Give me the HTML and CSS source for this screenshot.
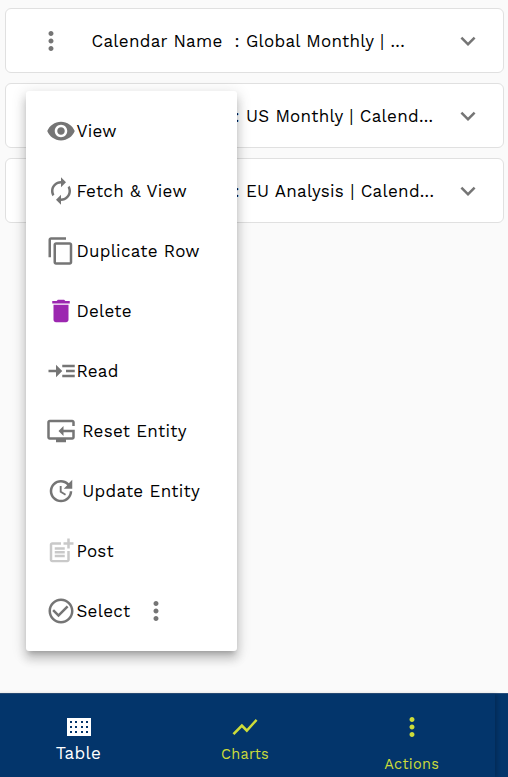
FILE: index.html
```html
<!DOCTYPE html>
<html lang="en">
<head>
<meta charset="utf-8">
<title>Calendars</title>
<link rel="stylesheet" href="styles.css">
</head>
<body>
<svg class="defs" aria-hidden="true">
  <symbol id="more" viewBox="0 0 24 24"><path d="M12 8c1.100 0 2-.9 2-2s-.9-2-2-2-2 .9-2 2 .9 2 2 2zm0 2c-1.100 0-2 .9-2 2s.9 2 2 2 2-.9 2-2-.9-2-2-2zm0 6c-1.100 0-2 .9-2 2s.9 2 2 2 2-.9 2-2-.9-2-2-2z"/></symbol>
  <symbol id="expand" viewBox="0 0 24 24"><path d="M16.590 8.590 12 13.170 7.410 8.590 6 10l6 6 6-6z"/></symbol>
</svg>
<main class="list">
  <article class="card first">
    <svg class="icon"><use href="#more"/></svg>
    <span class="label">Calendar Name</span>
    <span class="value">: Global Monthly | ...</span>
    <svg class="icon expand"><use href="#expand"/></svg>
  </article>
  <article class="card">
    <span class="value">: US Monthly | Calend...</span>
    <svg class="icon expand"><use href="#expand"/></svg>
  </article>
  <article class="card">
    <span class="value">: EU Analysis | Calend...</span>
    <svg class="icon expand"><use href="#expand"/></svg>
  </article>
</main>

<div class="menu">
  <div class="item"><svg class="icon" viewBox="0 0 24 24"><path d="M12 4.500C7 4.500 2.730 7.610 1 12c1.730 4.390 6 7.500 11 7.500s9.270-3.110 11-7.500c-1.730-4.390-6-7.500-11-7.500zM12 17c-2.760 0-5-2.240-5-5s2.240-5 5-5 5 2.240 5 5-2.240 5-5 5zm0-8c-1.660 0-3 1.340-3 3s1.340 3 3 3 3-1.340 3-3-1.340-3-3-3z"/></svg><span>View</span></div>
  <div class="item"><svg class="icon" viewBox="0 0 24 24"><path d="M12 6v3l4-4-4-4v3c-4.420 0-8 3.580-8 8 0 1.570.46 3.030 1.240 4.260L6.700 14.800c-.45-.83-.7-1.790-.7-2.800 0-3.310 2.690-6 6-6zm6.760 1.740L17.300 9.200c.44.84.7 1.790.7 2.800 0 3.310-2.690 6-6 6v-3l-4 4 4 4v-3c4.420 0 8-3.580 8-8 0-1.570-.46-3.030-1.240-4.260z"/></svg><span>Fetch &amp; View</span></div>
  <div class="item"><svg class="icon" viewBox="0 0 24 24"><path d="M16 1H4c-1.100 0-2 .9-2 2v14h2V3h12V1zm3 4H8c-1.100 0-2 .9-2 2v14c0 1.100.9 2 2 2h11c1.100 0 2-.9 2-2V7c0-1.100-.9-2-2-2zm0 16H8V7h11v14z"/></svg><span>Duplicate Row</span></div>
  <div class="item"><svg class="icon purple" viewBox="0 0 24 24"><path d="M6 19c0 1.100.9 2 2 2h8c1.100 0 2-.9 2-2V7H6v12zM19 4h-3.500l-1-1h-5l-1 1H5v2h14V4z"/></svg><span>Delete</span></div>
  <div class="item"><svg class="icon" viewBox="0 0 24 24"><path d="M13 7h10v2H13zM13 15h10v2H13zM16 11h7v2h-7zM13 12 8 7v4H2v2h6v4z"/></svg><span>Read</span></div>
  <div class="item"><svg class="icon" viewBox="0 0 24 24"><path d="M23 11h-9V8l-4 4 4 4v-3h7v4H3V5h18v3h2V5c0-1.100-.9-2-2-2H3c-1.100 0-2 .9-2 2v12c0 1.100.9 2 2 2h5v2h8v-2h5c1.100 0 2-.9 2-2z"/></svg><span class="gap">Reset Entity</span></div>
  <div class="item"><svg class="icon" viewBox="0 0 24 24"><path d="M21 10.120h-6.780l2.740-2.820c-2.730-2.700-7.150-2.800-9.880-.1-2.730 2.710-2.730 7.080 0 9.790s7.150 2.710 9.880 0C18.320 15.650 19 14.080 19 12.100h2c0 1.980-.88 4.550-2.640 6.290-3.510 3.480-9.210 3.480-12.720 0-3.500-3.470-3.530-9.110-.02-12.580s9.140-3.470 12.650 0L21 3v7.120zM12.500 8v4.250l3.500 2.080-.72 1.210L11 13V8h1.500z"/></svg><span class="gap">Update Entity</span></div>
  <div class="item"><svg class="icon faded" viewBox="0 0 24 24"><path d="M17 19.220H5V7h7V5H5c-1.100 0-2 .9-2 2v12c0 1.100.9 2 2 2h12c1.100 0 2-.9 2-2v-7h-2v7.220zM19 2h-2v3h-3v2h3v2.990h2V7h3V5h-3V2zM7 9h8v2H7zM7 12h8v2H7zM7 15h8v2H7z"/></svg><span>Post</span></div>
  <div class="item"><svg class="icon" viewBox="0 0 24 24"><path d="M16.590 7.580 10 14.170l-3.590-3.580L5 12l5 5 8-8zM12 2C6.480 2 2 6.480 2 12s4.480 10 10 10 10-4.480 10-10S17.520 2 12 2zm0 18c-4.420 0-8-3.580-8-8s3.580-8 8-8 8 3.580 8 8-3.580 8-8 8z"/></svg><span>Select</span><svg class="icon extra"><use href="#more"/></svg></div>
</div>

<footer class="bottom">
  <nav class="tabs">
    <div class="tab active"><svg class="icon" viewBox="0 0 30 30"><path fill-rule="evenodd" d="M4 6h24v18H4zM7 9h2v2H7zM12 9h2v2h-2zM18 9h2v2h-2zM23 9h2v2h-2zM7 14h2v2H7zM12 14h2v2h-2zM18 14h2v2h-2zM23 14h2v2h-2zM7 19h2v2H7zM12 19h2v2h-2zM18 19h2v2h-2zM23 19h2v2h-2z"/></svg><span>Table</span></div>
    <div class="tab"><svg class="icon" viewBox="0 0 24 24"><path d="M3.500 18.490l6-6.010 4 4L22 6.920l-1.410-1.410-7.090 7.970-4-4L2 16.990z"/></svg><span>Charts</span></div>
    <div class="tab actions"><svg class="icon"><use href="#more"/></svg><span>Actions</span></div>
  </nav>
</footer>
</body>
</html>
```
FILE: styles.css
```css
* { box-sizing: border-box; }
body {
  margin: 0;
  height: 777px;
  display: flex;
  flex-direction: column;
  overflow: hidden;
  background: #fafafa;
  color: #000;
  font-family: "Work Sans", Inter, sans-serif;
  font-size: 17px;
  font-weight: 400;
  line-height: 24px;
  letter-spacing: .28px;
}
.defs { position: absolute; width: 0; height: 0; }
.icon { width: 30px; height: 30px; flex: none; fill: #757575; }
.list { flex: 1; display: flex; flex-direction: column; gap: 10px; padding: 8px 4px 0 5px; }
.card {
  display: flex;
  align-items: center;
  height: 65px;
  padding: 0 20px 0 30px;
  background: #fff;
  border: 1px solid #e0e0e0;
  border-radius: 6px;
}
.card:not(.first) { padding-left: 228.5px; }
.label { width: 143px; margin-left: 25.5px; white-space: nowrap; }
.value { white-space: nowrap; }
.expand { margin-left: auto; }
.menu {
  position: absolute;
  left: 26px;
  top: 90.5px;
  width: 210.500px;
  height: 560px;
  padding: 10.500px 20px;
  background: #fff;
  border-radius: 3px;
  box-shadow: 0 5px 5px -3px rgba(0,0,0,.2), 0 8px 10px 1px rgba(0,0,0,.14), 0 3px 14px 2px rgba(0,0,0,.12);
}
.item { display: flex; align-items: center; height: 60px; }
.item span { margin-left: .4px; }
.item .gap { margin-left: 6.300px; }
.purple { fill: #9c27b0; }
.faded { fill: #c9c9c9; }
.extra { margin-left: 11px; }
.bottom { height: 84px; background: #03356b; border-top: 1px solid #294f7c; }
.tabs { width: 500px; height: 83px; margin-left: -5px; display: flex; box-shadow: 2px 0 4px rgba(0,0,0,.2); }
.tab {
  flex: 1;
  display: flex;
  flex-direction: column;
  align-items: center;
  padding-top: 18px;
  color: #cddc39;
  font-size: 14.5px;
  letter-spacing: .3px;
}
.tab .icon { fill: currentColor; }
.tab span { margin-top: 1px; }
.tab.active { color: #fff; font-size: 17px; }
.tab.active span { margin-top: -1px; }
.tab.actions span { margin-top: 11px; }
```
